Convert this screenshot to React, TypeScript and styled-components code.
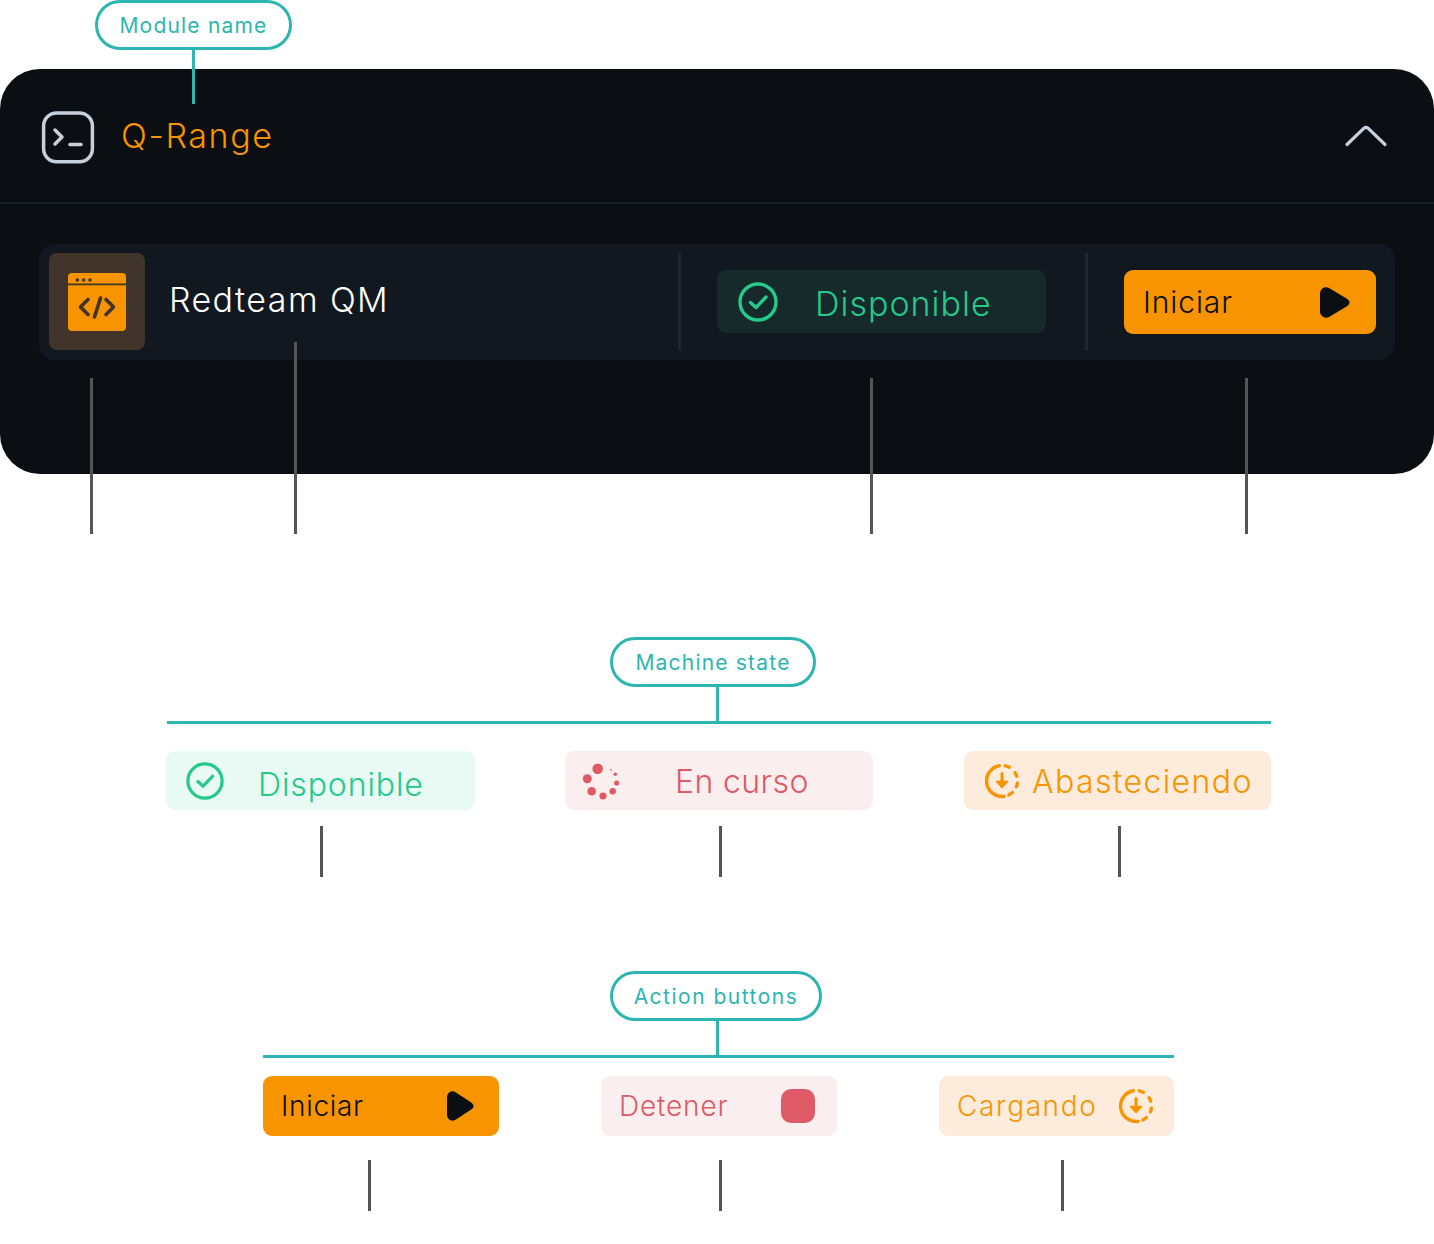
import styled, { createGlobalStyle } from 'styled-components';

const TEAL = '#2db5b2';
const ORANGE = '#f79400';
const GREEN = '#25c98a';
const RED = '#dd5a66';
const INK = '#0b0f14';
const SANS = "Inter, 'Liberation Sans', sans-serif";

const GlobalStyle = createGlobalStyle`
  html, body { margin: 0; padding: 0; background: #fff; }
  body { font-family: ${SANS}; }
`;

const Page = styled.div`
  width: 1434px;
  height: 1244px;
  overflow: hidden;
  background: #fff;
`;

const ModuleBlock = styled.section`
  position: relative;
`;

const Tag = styled.div<{ $left: number; $width: number; $spacing: number }>`
  box-sizing: border-box;
  margin-left: ${p => p.$left}px;
  width: ${p => p.$width}px;
  height: 50px;
  border: 3px solid ${TEAL};
  border-radius: 25px;
  display: flex;
  align-items: center;
  justify-content: center;
  color: ${TEAL};
  font-size: 21px;
  letter-spacing: ${p => p.$spacing}px;
  font-weight: 400;
`;

const TagConnector = styled.div`
  position: absolute;
  z-index: 2;
  left: 192px;
  top: 50px;
  width: 3px;
  height: 54px;
  background: ${TEAL};
`;

const Card = styled.div`
  position: relative;
  margin-top: 19px;
  height: 405px;
  background: ${INK};
  border-radius: 40px;
`;

const CardHeader = styled.header`
  box-sizing: border-box;
  height: 135px;
  padding: 0 46px 0 41px;
  display: flex;
  align-items: center;
  border-bottom: 2px solid #1a1f25;
`;

const ModuleTitle = styled.h1`
  margin: 0 auto 0 26px;
  color: ${ORANGE};
  font-size: 34px;
  font-weight: 350;
  letter-spacing: 1.6px;
`;

const Row = styled.div`
  box-sizing: border-box;
  margin: 40px 39px 0;
  height: 116px;
  padding: 0 19px 0 10px;
  border-radius: 16px;
  background: #111820;
  display: flex;
  align-items: center;
`;

const AppTile = styled.div`
  width: 96px;
  height: 97px;
  margin-bottom: 1px;
  flex: none;
  border-radius: 8px;
  background: #41342b;
  display: flex;
  align-items: center;
  justify-content: center;
`;

const AppName = styled.div`
  flex: 1;
  padding: 0 0 5px 24px;
  color: #fff;
  font-size: 34px;
  font-weight: 350;
  letter-spacing: 1.4px;
`;

const Divider = styled.div<{ $before: number; $after: number }>`
  width: 3px;
  height: 97px;
  flex: none;
  margin: 0 ${p => p.$after}px 1px ${p => p.$before}px;
  background: #20262d;
`;

const StatusChip = styled.div<{ $bg: string; $color: string; $width?: number; $height: number; $pad: number; $gap: number; $lift?: number }>`
  box-sizing: border-box;
  flex: none;
  width: ${p => (p.$width ? `${p.$width}px` : 'auto')};
  height: ${p => p.$height}px;
  margin-bottom: ${p => p.$lift ?? 0}px;
  padding-left: ${p => p.$pad}px;
  border-radius: 9px;
  background: ${p => p.$bg};
  color: ${p => p.$color};
  display: flex;
  align-items: center;
  gap: ${p => p.$gap}px;
`;

const StatusText = styled.span<{ $size: number; $spacing: number; $nudge?: number }>`
  font-size: ${p => p.$size}px;
  font-weight: 350;
  letter-spacing: ${p => p.$spacing}px;
  margin-top: ${p => p.$nudge ?? 0}px;
  white-space: nowrap;
`;

const ActionButton = styled.div<{ $bg: string; $color: string; $width?: number; $height: number; $padL: number; $padR: number }>`
  box-sizing: border-box;
  flex: none;
  width: ${p => (p.$width ? `${p.$width}px` : 'auto')};
  height: ${p => p.$height}px;
  padding: 0 ${p => p.$padR}px 0 ${p => p.$padL}px;
  border-radius: 9px;
  background: ${p => p.$bg};
  color: ${p => p.$color};
  display: flex;
  align-items: center;
  justify-content: space-between;
`;

const ButtonText = styled.span<{ $size: number; $spacing: number }>`
  font-size: ${p => p.$size}px;
  font-weight: 350;
  letter-spacing: ${p => p.$spacing}px;
`;

const StopSquare = styled.span`
  width: 34px;
  height: 34px;
  border-radius: 10px;
  background: ${RED};
`;

const Leader = styled.div<{ $left: number; $top: number; $height: number }>`
  position: absolute;
  left: ${p => p.$left}px;
  top: ${p => p.$top}px;
  width: 3px;
  height: ${p => p.$height}px;
  background: #555;
`;

const Group = styled.section<{ $top: number }>`
  margin-top: ${p => p.$top}px;
`;

const VStem = styled.div<{ $left: number }>`
  margin-left: ${p => p.$left}px;
  width: 3px;
  height: 34px;
  background: ${TEAL};
`;

const HLine = styled.div<{ $left: number; $width: number }>`
  margin-left: ${p => p.$left}px;
  width: ${p => p.$width}px;
  height: 3px;
  background: ${TEAL};
`;

const Items = styled.div<{ $left: number; $col: number; $gap: number; $top: number }>`
  margin: ${p => p.$top}px 0 0 ${p => p.$left}px;
  display: grid;
  grid-template-columns: repeat(3, ${p => p.$col}px);
  column-gap: ${p => p.$gap}px;
`;

const ItemStem = styled.div<{ $left: number; $top: number }>`
  margin: ${p => p.$top}px 0 0 ${p => p.$left}px;
  width: 3px;
  height: 51px;
  background: #555;
`;

const TerminalIcon = () => (
  <svg width="54" height="54" viewBox="0 0 54 54" fill="none" stroke="#c7cfdc" strokeWidth="3.500" strokeLinecap="round" strokeLinejoin="round" style={{ marginTop: 2 }}>
    <rect x="2.600" y="2.900" width="48.800" height="48.800" rx="13" />
    <path d="M14 20l7 7-7 7" />
    <path d="M29 34.500h11" />
  </svg>
);

const ChevronUp = () => (
  <svg width="44" height="24" viewBox="0 0 44 24" fill="none">
    <path d="M3 20.500L20 4.200q2-1.800 4 0L41 20.500" stroke="#c7d0dc" strokeWidth="3.200" strokeLinecap="round" strokeLinejoin="round" />
  </svg>
);

const CodeWindow = () => (
  <svg width="58" height="58" viewBox="0 0 58 58">
    <path d="M4 0h50a4 4 0 0 1 4 4v6.500H0V4a4 4 0 0 1 4-4z" fill={ORANGE} />
    <path d="M0 12.200h58V54a4 4 0 0 1-4 4H4a4 4 0 0 1-4-4z" fill={ORANGE} />
    <circle cx="9.300" cy="7" r="1.800" fill="#41342b" />
    <circle cx="15.700" cy="7" r="1.800" fill="#41342b" />
    <circle cx="22" cy="7" r="1.800" fill="#41342b" />
    <path d="M20 26.500l-7.500 7.500 7.500 7.500M38 26.500l7.500 7.500-7.500 7.500M32.500 25l-6 19" fill="none" stroke="#41342b" strokeWidth="3.600" strokeLinecap="round" strokeLinejoin="round" />
  </svg>
);

const CheckCircle = ({ color, size }: { color: string; size: number }) => (
  <svg width={size} height={size} viewBox="0 0 40 40" fill="none" stroke={color} style={{ flex: 'none' }}>
    <circle cx="20" cy="20" r="18" strokeWidth="3.400" />
    <path d="M12.500 20.500l5.500 5L28 15" strokeWidth="3.400" strokeLinecap="round" strokeLinejoin="round" />
  </svg>
);

const PlayIcon = ({ w, h }: { w: number; h: number }) => (
  <svg width={w} height={h} viewBox="0 0 30 31" preserveAspectRatio="none">
    <path d="M0 7C0 1.500 5-1.200 9.500 1.300L26.500 11.500C30.500 14 30.500 17 26.500 19.500L9.500 29.700C5 32.200 0 29.500 0 24z" fill={INK} />
  </svg>
);

const SPINNER_DOTS = [
  [17.7, 7.7, 5.3],
  [7.3, 17.7, 4.5],
  [11.7, 30.3, 4.3],
  [23, 35, 3.6],
  [32.7, 30.3, 3.2],
  [36.7, 22, 2.6],
  [35.3, 13.3, 1.8],
  [31, 8.7, 0.9],
];

const Spinner = () => (
  <svg width="40" height="40" viewBox="0 0 40 40" style={{ flex: 'none' }}>
    {SPINNER_DOTS.map(([cx, cy, r]) => (
      <circle key={cx} cx={cx} cy={cy} r={r} fill={RED} />
    ))}
  </svg>
);

const arc = (from: number, to: number) => {
  const r = 15.5;
  const pt = (deg: number) => {
    const a = ((deg - 90) * Math.PI) / 180;
    return `${(18 + r * Math.cos(a)).toFixed(2)} ${(18 + r * Math.sin(a)).toFixed(2)}`;
  };
  const large = to - from > 180 ? 1 : 0;
  return `M${pt(from)}A${r} ${r} 0 ${large} 1 ${pt(to)}`;
};

const LoadIcon = ({ size }: { size: number }) => (
  <svg width={size} height={size} viewBox="0 0 36 36" fill="none" stroke={ORANGE} strokeWidth="3.400" strokeLinecap="round" style={{ flex: 'none' }}>
    <path d={arc(172, 350)} />
    <path d={arc(12, 28)} />
    <path d={arc(58, 72)} />
    <path d={arc(98, 112)} />
    <path d={arc(138, 154)} />
    <path d="M18 10.500V20" strokeWidth="3" />
    <path d="M12.500 18.500h11L18 24.500z" fill={ORANGE} strokeWidth="1.600" strokeLinejoin="round" />
  </svg>
);

export default function App() {
  return (
    <Page>
      <GlobalStyle />

      <ModuleBlock>
        <Tag $left={95} $width={197} $spacing={1.2}>Module name</Tag>
        <TagConnector />
        <Card>
          <CardHeader>
            <TerminalIcon />
            <ModuleTitle>Q-Range</ModuleTitle>
            <ChevronUp />
          </CardHeader>
          <Row>
            <AppTile>
              <CodeWindow />
            </AppTile>
            <AppName>Redteam QM</AppName>
            <Divider $before={0} $after={36} />
            <StatusChip $bg="#162a2c" $color={GREEN} $width={329} $height={63} $pad={21} $gap={37} $lift={1}>
              <CheckCircle color={GREEN} size={40} />
              <StatusText $size={34} $spacing={1} $nudge={3}>Disponible</StatusText>
            </StatusChip>
            <Divider $before={39} $after={36} />
            <ActionButton $bg={ORANGE} $color={INK} $width={252} $height={64} $padL={19} $padR={26}>
              <ButtonText $size={30} $spacing={0.9}>Iniciar</ButtonText>
              <PlayIcon w={30} h={31} />
            </ActionButton>
          </Row>
          <Leader $left={90} $top={309} $height={156} />
          <Leader $left={294} $top={273} $height={192} />
          <Leader $left={870} $top={309} $height={156} />
          <Leader $left={1245} $top={309} $height={156} />
        </Card>
      </ModuleBlock>

      <Group $top={163}>
        <Tag $left={610} $width={206} $spacing={1.2}>Machine state</Tag>
        <VStem $left={716} />
        <HLine $left={167} $width={1104} />
        <Items $left={166} $col={308} $gap={91} $top={27}>
          <div>
            <StatusChip $bg="#e9f9f4" $color={GREEN} $width={309} $height={59} $pad={20} $gap={34}>
              <CheckCircle color={GREEN} size={38} />
              <StatusText $size={32} $spacing={0.9} $nudge={7}>Disponible</StatusText>
            </StatusChip>
            <ItemStem $left={154} $top={16} />
          </div>
          <div>
            <StatusChip $bg="#fbeeef" $color={RED} $height={59} $pad={15} $gap={55}>
              <Spinner />
              <StatusText $size={32} $spacing={0.4} $nudge={1}>En curso</StatusText>
            </StatusChip>
            <ItemStem $left={154} $top={16} />
          </div>
          <div>
            <StatusChip $bg="#fdebdc" $color={ORANGE} $width={307} $height={59} $pad={20} $gap={12}>
              <LoadIcon size={36} />
              <StatusText $size={32} $spacing={1.4} $nudge={1}>Abasteciendo</StatusText>
            </StatusChip>
            <ItemStem $left={154} $top={16} />
          </div>
        </Items>
      </Group>

      <Group $top={94}>
        <Tag $left={610} $width={212} $spacing={1.5}>Action buttons</Tag>
        <VStem $left={716} />
        <HLine $left={263} $width={911} />
        <Items $left={263} $col={236} $gap={102} $top={18}>
          <div>
            <ActionButton $bg={ORANGE} $color={INK} $height={60} $padL={18} $padR={25}>
              <ButtonText $size={28} $spacing={0.7}>Iniciar</ButtonText>
              <PlayIcon w={27} h={30} />
            </ActionButton>
            <ItemStem $left={105} $top={24} />
          </div>
          <div>
            <ActionButton $bg="#fbeeef" $color={RED} $height={60} $padL={18} $padR={22}>
              <ButtonText $size={28} $spacing={0.85}>Detener</ButtonText>
              <StopSquare />
            </ActionButton>
            <ItemStem $left={118} $top={24} />
          </div>
          <div>
            <ActionButton $bg="#fdebdc" $color={ORANGE} $width={235} $height={60} $padL={18} $padR={20}>
              <ButtonText $size={28} $spacing={1.6}>Cargando</ButtonText>
              <LoadIcon size={36} />
            </ActionButton>
            <ItemStem $left={122} $top={24} />
          </div>
        </Items>
      </Group>
    </Page>
  );
}
